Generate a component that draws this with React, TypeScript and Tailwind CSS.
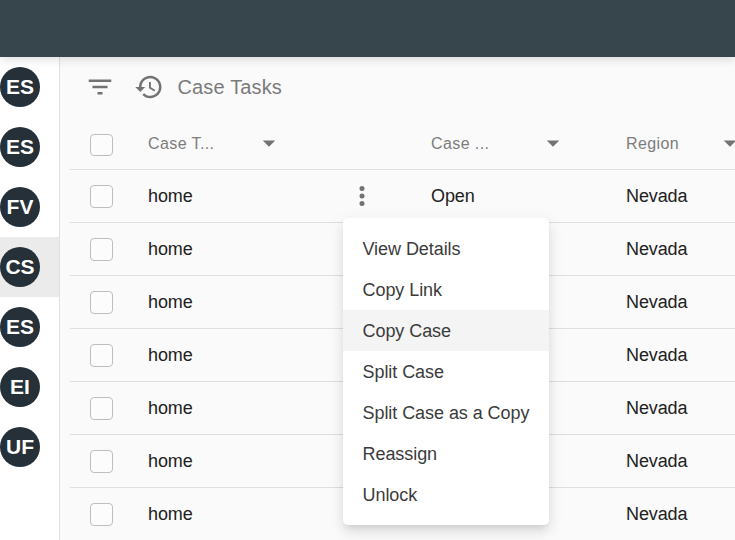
import type { ReactNode } from 'react';

const cases = ['ES', 'ES', 'FV', 'CS', 'ES', 'EI', 'UF'];
const rows = [0, 1, 2, 3, 4, 5, 6];
const actions = ['View Details', 'Copy Link', 'Copy Case', 'Split Case', 'Split Case as a Copy', 'Reassign', 'Unlock'];

function Icon({ children }: { children: ReactNode }) {
  return (
    <svg viewBox="0 0 24 24" className="block size-[30px] shrink-0 fill-[#737373]">
      {children}
    </svg>
  );
}

function Checkbox({ header = false }: { header?: boolean }) {
  return (
    <span
      className={`block w-[23px] rounded-[4px] border border-[#bebebe] bg-[#fcfcfc] ${header ? 'mt-[3px] h-[22px]' : 'mt-px h-[23px]'}`}
    />
  );
}

function SortArrow() {
  return (
    <Icon>
      <path d="M7 10l5 5 5-5z" />
    </Icon>
  );
}

function ActionMenu() {
  return (
    <ul className="absolute top-[218px] left-[343px] z-20 h-[307px] w-[206px] rounded-[5px] bg-white pt-[10px] text-[18px] tracking-[-0.06px] text-[#3b3b3b] shadow-[0_5px_6px_-3px_rgba(0,0,0,0.10),0_8px_12px_1px_rgba(0,0,0,0.06),0_3px_16px_2px_rgba(0,0,0,0.05)]">
      {actions.map((a) => (
        <li
          key={a}
          className={`flex h-[41px] items-center pt-[2px] pl-[19.5px] whitespace-nowrap ${a === 'Copy Case' ? 'bg-[#f4f4f4]' : ''}`}
        >
          {a}
        </li>
      ))}
    </ul>
  );
}

export default function App() {
  return (
    <div className="relative flex h-[540px] w-[735px] flex-col overflow-hidden bg-[#fafafa] font-['Liberation_Sans',Arial,sans-serif]">
      <header className="z-10 h-[57px] shrink-0 bg-[#37464d] shadow-[0_2px_10px_rgba(0,0,0,0.14)]" />
      <div className="flex min-h-0 flex-1">
        <nav className="w-[60px] shrink-0 border-r border-[#dfdfdf] bg-white">
          {cases.map((c, i) => (
            <div key={i} className={`flex h-[60px] items-center ${c === 'CS' ? 'bg-[#ebebeb]' : ''}`}>
              <span className="size-10 rounded-full bg-[#263038] text-center text-[21px] leading-[40px] font-bold text-white">
                {c}
              </span>
            </div>
          ))}
        </nav>
        <main className="min-w-0 flex-1 overflow-hidden pl-[10px]">
          <div className="flex h-[60px] items-center pl-[15px] text-[#7a7a7a]">
            <Icon>
              <path d="M10 18h4v-2h-4v2zM3 6v2h18V6H3zm3 7h12v-2H6v2z" />
            </Icon>
            <span className="ml-[19px]">
              <Icon>
                <path d="M13 3c-4.97 0-9 4.03-9 9H1l3.89 3.89.07.14L9 12H6c0-3.87 3.13-7 7-7s7 3.13 7 7-3.13 7-7 7c-1.93 0-3.68-.79-4.94-2.06l-1.42 1.42C8.27 19.99 10.51 21 13 21c4.97 0 9-4.03 9-9s-4.03-9-9-9zm-1 5v5l4.28 2.54.72-1.21-3.5-2.08V8H12z" />
              </Icon>
            </span>
            <h1 className="ml-[13.5px] text-[20px] tracking-[0.15px]">Case Tasks</h1>
          </div>
          <div className="grid h-[53px] w-[700px] grid-cols-[78px_283px_195px_144px] items-center border-b border-[#dedede] text-[16px] tracking-[0.4px] text-[#7d7d7d]">
            <div className="pl-5">
              <Checkbox header />
            </div>
            <div className="flex items-center">
              <span className="w-[106px] pt-[2px]">Case T...</span>
              <SortArrow />
            </div>
            <div className="flex items-center">
              <span className="w-[107px] pt-[2px]">Case ...</span>
              <SortArrow />
            </div>
            <div className="flex items-center">
              <span className="w-[89px] pt-[2px]">Region</span>
              <SortArrow />
            </div>
          </div>
          {rows.map((r) => (
            <div
              key={r}
              className="grid h-[53px] w-[700px] grid-cols-[78px_283px_195px_144px] items-center border-b border-[#dedede] text-[18px] tracking-[-0.1px] text-[#212121]"
            >
              <div className="pl-5">
                <Checkbox />
              </div>
              <div className="flex items-center">
                <span className="w-[199px]">home</span>
                {r === 0 && (
                  <Icon>
                    <circle cx="12" cy="6" r="2" />
                    <circle cx="12" cy="12" r="2" />
                    <circle cx="12" cy="18" r="2" />
                  </Icon>
                )}
              </div>
              <span>{r === 0 ? 'Open' : ''}</span>
              <span>Nevada</span>
            </div>
          ))}
        </main>
      </div>
      <ActionMenu />
    </div>
  );
}
